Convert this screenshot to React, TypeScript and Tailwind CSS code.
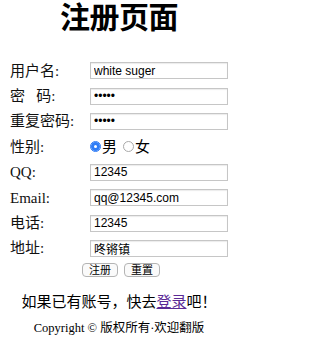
import React, { useState } from 'react';

const serif = 'font-["Liberation_Serif","Noto_Sans_CJK_SC",serif]';
const sans = 'font-["Liberation_Sans","Noto_Sans_CJK_SC",sans-serif]';

const inputClass = `w-[138px] h-[17px] px-[3px] text-[12px] leading-[15px] text-black bg-white border border-[#c6c6c6] shadow-[inset_0_1px_1px_rgba(0,0,0,0.08)] outline-none ${sans}`;

const Row: React.FC<{ label: React.ReactNode; children: React.ReactNode }> = ({ label, children }) => (
  <div className="flex items-center h-[25.4px]">
    <label className="w-[90px] shrink-0 pl-[10px] text-[15px] leading-[18px] text-[#111]">{label}</label>
    {children}
  </div>
);

const App: React.FC = () => {
  const [model, setModel] = useState({
    userName: 'white suger',
    password: '12345',
    confirm: '12345',
    sex: 'male',
    qq: '12345',
    email: 'qq@12345.com',
    phone: '12345',
    address: '咚锵镇'
  });

  return (
    <div className={`w-[238px] h-[340px] bg-white overflow-hidden text-black ${serif}`}>
      <h1 className="text-[30px] leading-[36px] font-bold text-center tracking-[-0.5px]">注册页面</h1>

      <form className="mt-[22px]" onSubmit={(e) => e.preventDefault()}>
        <Row label="用户名:">
          <input
            type="text"
            value={model.userName}
            onChange={(e) => setModel({ ...model, userName: e.target.value })}
            className={inputClass}
          />
        </Row>
        <Row label={<>密&nbsp;&nbsp;&nbsp;码:</>}>
          <input
            type="password"
            value={model.password}
            onChange={(e) => setModel({ ...model, password: e.target.value })}
            className={inputClass}
          />
        </Row>
        <Row label="重复密码:">
          <input
            type="password"
            value={model.confirm}
            onChange={(e) => setModel({ ...model, confirm: e.target.value })}
            className={inputClass}
          />
        </Row>
        <Row label="性别:">
          <div className="flex items-center text-[15px] leading-[18px]">
            <input
              type="radio"
              name="sex"
              checked={model.sex === 'male'}
              onChange={() => setModel({ ...model, sex: 'male' })}
              className="appearance-none w-[11px] h-[11px] rounded-full border border-[#a9a9a9] bg-white checked:border-[#2f7df6] checked:shadow-[inset_0_0_0_3px_#2f7df6]"
            />
            <span className="ml-[1px]">男</span>
            <input
              type="radio"
              name="sex"
              checked={model.sex === 'female'}
              onChange={() => setModel({ ...model, sex: 'female' })}
              className="ml-[6px] appearance-none w-[11px] h-[11px] rounded-full border border-[#a9a9a9] bg-white checked:border-[#2f7df6] checked:shadow-[inset_0_0_0_3px_#2f7df6]"
            />
            <span className="ml-[1px]">女</span>
          </div>
        </Row>
        <Row label="QQ:">
          <input
            type="text"
            value={model.qq}
            onChange={(e) => setModel({ ...model, qq: e.target.value })}
            className={inputClass}
          />
        </Row>
        <Row label="Email:">
          <input
            type="text"
            value={model.email}
            onChange={(e) => setModel({ ...model, email: e.target.value })}
            className={inputClass}
          />
        </Row>
        <Row label="电话:">
          <input
            type="text"
            value={model.phone}
            onChange={(e) => setModel({ ...model, phone: e.target.value })}
            className={inputClass}
          />
        </Row>
        <Row label="地址:">
          <input
            type="text"
            value={model.address}
            onChange={(e) => setModel({ ...model, address: e.target.value })}
            className={`${inputClass} border-[#94b6e6] shadow-[0_0_0_2px_#cfe0f7]`}
          />
        </Row>

        {/* Buttons */}
        <div className="flex items-center justify-center gap-[6px] h-[18px] pl-[4px]">
          <button
            type="submit"
            className={`h-[14px] px-[6px] text-[11px] leading-[12px] rounded-[4px] border border-[#b4b4b4] bg-[#fafafa] ${sans}`}
          >
            注册
          </button>
          <button
            type="reset"
            className={`h-[14px] px-[6px] text-[11px] leading-[12px] rounded-[4px] border border-[#b4b4b4] bg-[#fafafa] ${sans}`}
          >
            重置
          </button>
        </div>
      </form>

      <p className="mt-[13px] text-[15px] leading-[20px] text-center">
        如果已有账号，快去<a href="#" className="text-[#5b2a96] underline">登录</a>吧！
      </p>
      <p className="mt-[8px] text-[12.5px] leading-[16px] text-center">Copyright © 版权所有·欢迎翻版</p>
    </div>
  );
};

export default App;
